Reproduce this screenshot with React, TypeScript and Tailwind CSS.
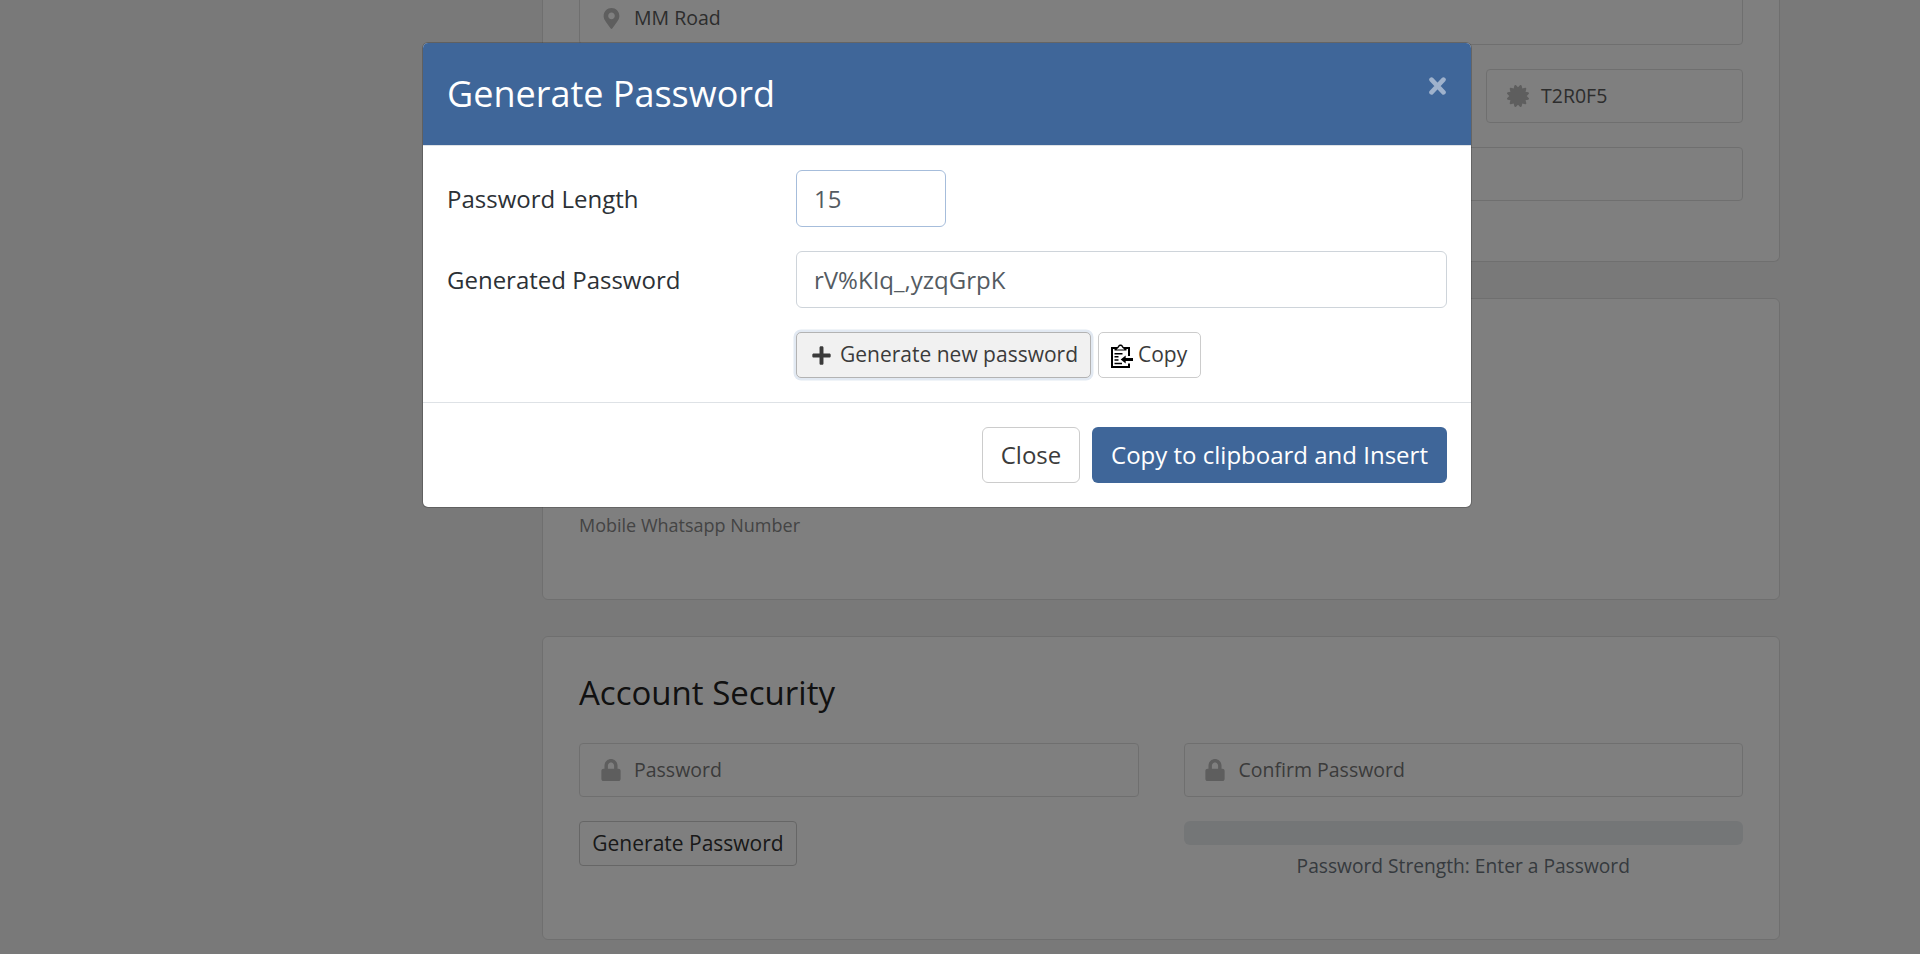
import React from "react";
import { FaPlus, FaLock, FaCertificate, FaMapMarkerAlt } from "react-icons/fa";

function Field({ icon, text, className = "" }: { icon?: React.ReactNode; text?: string; className?: string }) {
  return (
    <div className={`flex h-[54px] items-center rounded-[4px] border border-[#dfdfdf] bg-white text-[19.5px] ${className}`}>
      <span className="flex w-[54px] shrink-0 justify-end pr-[12.5px] text-[#bcbcbc]">{icon}</span>
      <span>{text}</span>
    </div>
  );
}

function CopyIcon() {
  return (
    <svg width="22" height="24" viewBox="0 0 22 24" fill="none" stroke="#000" className="mt-[2px]">
      <path d="M18 12V4h-3M4 4H1v19h17v-3.500" strokeWidth="2" />
      <path d="M3.500 6.500V3H6c1 0 1-.800 1.500-1.700C8 .300 11 .300 11.500 1.300 12 2.200 12 3 13 3h2.500v3.500z" fill="#000" stroke="none" />
      <path d="M5.500 5.500h8l-1.500-1.200C11 4 11 2 9.500 2S8 4 7 4.300z" fill="#fff" stroke="none" />
      <path d="M3.500 9.700h8M3.500 12.700h4M3.500 16h4M3.500 19.500h7.500" strokeWidth="1.400" />
      <path d="M22 15.500h-8" strokeWidth="3" />
      <path d="M9.700 15.500l5-4v8z" fill="#000" stroke="none" />
    </svg>
  );
}

export default function App() {
  return (
    <div className="relative h-[954px] w-full overflow-hidden bg-[#f2f2f2] font-['Open_Sans',sans-serif]">
      <main className="ml-[542px] flex w-[1238px] flex-col gap-9">
        <section className="-mt-3 flex h-[274px] flex-col gap-6 rounded-b-[6px] border border-t-0 border-[#dfdfdf] bg-white px-9 pt-[3px] text-[#5a5a5a]">
          <Field icon={<FaMapMarkerAlt size={21} />} text="MM Road" />
          <div className="flex justify-end">
            <Field className="w-[257px]" icon={<FaCertificate size={22} />} text="T2R0F5" />
          </div>
          <Field />
        </section>
        <section className="flex h-[302px] flex-col justify-end rounded-[6px] border border-[#dfdfdf] bg-white px-9 pb-[60px] text-[#888]">
          <span className="text-[18px] leading-[27px]">Mobile Whatsapp Number</span>
        </section>
        <section className="flex h-[304px] flex-col rounded-[6px] border border-[#dfdfdf] bg-white px-9 pt-[36px]">
          <h3 className="text-[33px] leading-[40px] text-[#222]">Account Security</h3>
          <div className="mt-[30px] grid grid-cols-2 gap-x-[45px] text-[#777]">
            <div className="flex flex-col items-start gap-6">
              <Field className="w-full" icon={<FaLock size={22} />} text="Password" />
              <button className="flex h-[45px] w-[218px] items-center justify-center rounded-[4px] border border-[#ccc] text-[21px] text-[#333]">Generate Password</button>
            </div>
            <div className="flex flex-col">
              <Field icon={<FaLock size={22} />} text="Confirm Password" />
              <div className="mt-6 h-6 rounded-[6px] bg-[#e9ecef]" />
              <p className="mt-[6px] text-center text-[19.2px] leading-[30px] text-[#6c757d]">Password Strength: Enter a Password</p>
            </div>
          </div>
        </section>
      </main>

      <div className="absolute inset-0 bg-black/50" />

      <div role="dialog" className="absolute left-[422px] top-[42px] flex h-[466px] w-[1050px] flex-col rounded-[6px] border border-black/20 bg-white bg-clip-padding text-[24px] text-[#2c3136]">
        <header className="flex h-[103px] items-start justify-between rounded-t-[5px] border-b border-[#dee2e6] bg-[#3f6699] px-6 text-white">
          <h5 className="mt-6 text-[36px] leading-[54px]">Generate Password</h5>
          <button aria-label="Close" className="mr-px mt-[34px]">
            <svg width="17" height="18" viewBox="0 0 17 18" fill="none" stroke="#9fb2cc" strokeWidth="4.600" strokeLinecap="round">
              <path d="M2.500 2.600l12 12.800M14.500 2.600l-12 12.800" />
            </svg>
          </button>
        </header>
        <div className="grid grid-cols-[349px_1fr] items-center gap-y-6 px-6 pt-6">
          <span>Password Length</span>
          <div className="flex h-[57px] w-[150px] items-center rounded-[6px] border border-[#a6bddb] px-[17px] text-[#545b62]">15</div>
          <span>Generated Password</span>
          <div className="flex h-[57px] items-center rounded-[6px] border border-[#ced4da] px-[17px] text-[#545b62]">rV%KIq_,yzqGrpK</div>
          <div className="col-start-2 flex gap-[7px] text-[21px] text-[#3b3b3b]">
            <button className="flex h-[46px] w-[295px] items-center rounded-[5px] border border-[#b3b3b3] bg-[#f1f1f1] pl-[14px] shadow-[0_0_0_2.5px_#e2e9f2]">
              <FaPlus size={21} />
              <span className="-mt-px ml-[8px] whitespace-nowrap">Generate new password</span>
            </button>
            <button className="flex h-[46px] w-[103px] items-center rounded-[5px] border border-[#ccc] pl-[12px]">
              <CopyIcon />
              <span className="-mt-px ml-[5px]">Copy</span>
            </button>
          </div>
        </div>
        <footer className="mt-6 flex justify-end gap-3 border-t border-[#dee2e6] px-6 pt-6">
          <button className="h-14 w-[98px] rounded-[6px] border border-[#ccc] text-[#3b3b3b]">Close</button>
          <button className="h-14 w-[355px] rounded-[6px] bg-[#3f6699] text-white">Copy to clipboard and Insert</button>
        </footer>
      </div>
    </div>
  );
}
